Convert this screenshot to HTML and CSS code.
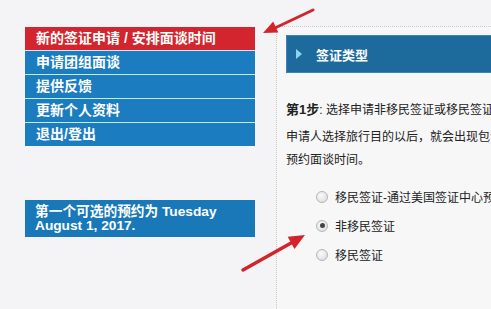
FILE: index.html
```html
<!DOCTYPE html>
<html lang="zh-CN">
<head>
<meta charset="utf-8">
<title>签证预约</title>
<link rel="stylesheet" href="styles.css">
</head>
<body>
<div class="page">
  <div class="sidebar">
    <ul class="menu">
      <li class="menu-item active">新的签证申请 / 安排面谈时间</li>
      <li class="menu-item">申请团组面谈</li>
      <li class="menu-item">提供反馈</li>
      <li class="menu-item">更新个人资料</li>
      <li class="menu-item">退出/登出</li>
    </ul>
    <div class="notice">第一个可选的预约为 Tuesday August 1, 2017.</div>
  </div>
  <div class="panel">
    <div class="panel-head"><span class="tri"></span><span class="head-title">签证类型</span></div>
    <p class="step"><b>第1步</b>: 选择申请非移民签证或移民签证</p>
    <p class="desc">申请人选择旅行目的以后，就会出现包含的签证类别及预约面谈时间。</p>
    <div class="options">
      <div class="opt"><span class="radio"></span><span class="opt-label">移民签证-通过美国签证中心预约</span></div>
      <div class="opt"><span class="radio checked"></span><span class="opt-label">非移民签证</span></div>
      <div class="opt"><span class="radio"></span><span class="opt-label">移民签证</span></div>
    </div>
  </div>
</div>
<svg class="arrows" width="491" height="309" viewBox="0 0 491 309">
  <line x1="313" y1="10" x2="276" y2="27.5" stroke="#d3242c" stroke-width="3" stroke-linecap="round"/>
  <polygon points="263,33 273.2,21.6 278.3,32.5" fill="#d3242c"/>
  <line x1="243" y1="270" x2="292" y2="242.5" stroke="#d3242c" stroke-width="3.5" stroke-linecap="round"/>
  <polygon points="305,235 287.7,236.8 294.5,249" fill="#d3242c"/>
</svg>
</body>
</html>
```

FILE: styles.css
```css
html, body {
  margin: 0;
  padding: 0;
}
body {
  width: 491px;
  height: 309px;
  overflow: hidden;
  background: #f4f4f6;
  font-family: "Liberation Sans", "Noto Sans CJK SC", sans-serif;
  position: relative;
}
.page {
  display: flex;
  align-items: flex-start;
  height: 309px;
}
.sidebar {
  width: 230px;
  margin-left: 25px;
  margin-top: 27px;
}
.menu {
  list-style: none;
  margin: 0;
  padding: 0;
}
.menu-item {
  height: 23px;
  line-height: 23px;
  padding-left: 11px;
  background: #1b7cbf;
  color: #fff;
  font-weight: bold;
  font-size: 14px;
  border-bottom: 1px solid #c4ecf8;
  white-space: nowrap;
}
.menu-item.active {
  background: #d2252d;
}
.menu-item:last-child {
  border-bottom: none;
}
.notice {
  margin-top: 54px;
  background: #1878b8;
  color: #fff;
  font-weight: bold;
  font-size: 13.7px;
  line-height: 14px;
  padding: 5px 10px 4px;
}
.panel {
  flex: 1;
  margin-left: 21px;
  margin-top: 26px;
  align-self: stretch;
  border-left: 1px dotted #c9c9cc;
  border-top: 1px dotted #c9c9cc;
  background: #f7f7f8;
  padding: 8px 0 0 9px;
  overflow: hidden;
  white-space: nowrap;
}
.panel-head {
  height: 36px;
  background: #1d6a9c;
  border: 1px solid #3c84b3;
  border-right: none;
  display: flex;
  align-items: center;
}
.tri {
  width: 0;
  height: 0;
  margin-left: 9px;
  border-top: 5px solid transparent;
  border-bottom: 5px solid transparent;
  border-left: 6px solid #8fd3f3;
}
.head-title {
  margin-left: 14px;
  color: #fff;
  font-weight: bold;
  font-size: 13px;
}
.step {
  margin: 28px 0 0;
  font-size: 12px;
  line-height: 18px;
  color: #222;
}
.step b {
  font-size: 13px;
}
.desc {
  margin: 7px 0 0;
  width: 290px;
  font-size: 12px;
  line-height: 23px;
  color: #222;
  white-space: normal;
  word-break: break-all;
}
.options {
  margin-top: 10px;
  padding-left: 30px;
}
.opt {
  height: 29px;
  display: flex;
  align-items: center;
}
.radio {
  width: 10px;
  height: 10px;
  border: 1px solid #b5b5b8;
  border-radius: 50%;
  background: radial-gradient(circle at 40% 35%, #fafafa, #d9d9dc);
  position: relative;
  flex: none;
}
.radio.checked::after {
  content: "";
  position: absolute;
  left: 2.5px;
  top: 2.5px;
  width: 5px;
  height: 5px;
  border-radius: 50%;
  background: #444;
}
.opt-label {
  margin-left: 7px;
  font-size: 12px;
  color: #222;
}
.arrows {
  position: absolute;
  left: 0;
  top: 0;
  pointer-events: none;
}
```
